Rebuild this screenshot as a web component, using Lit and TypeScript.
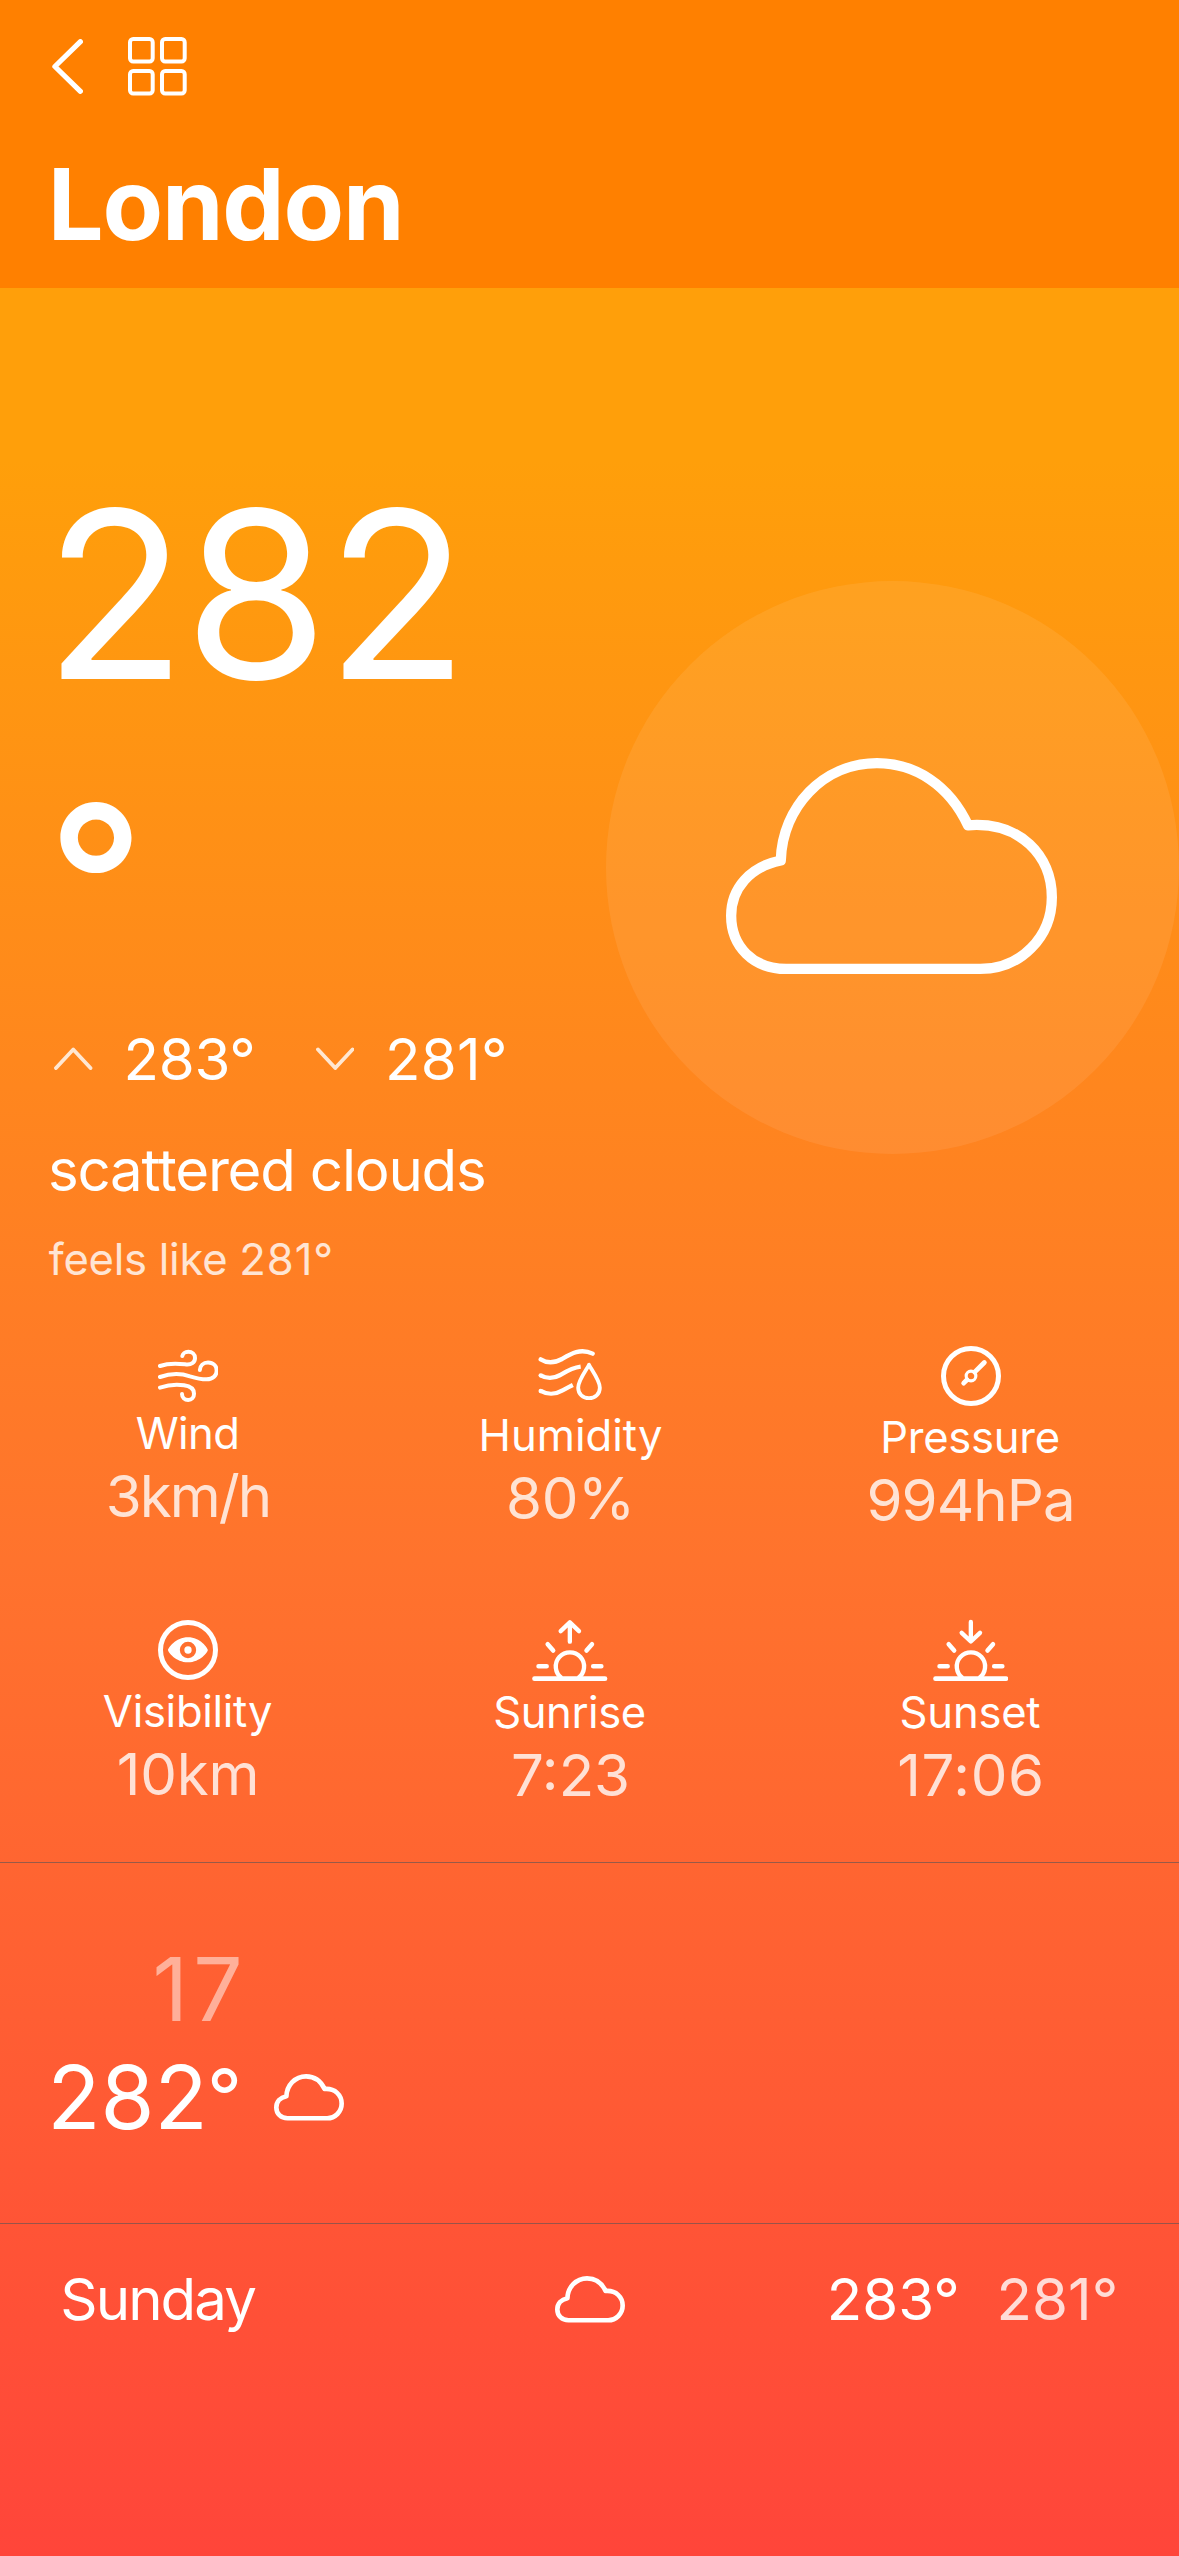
import { LitElement, html, css, svg, TemplateResult } from "lit";
import { customElement, property } from "lit/decorators.js";

const cloudPath =
  "M49.6 97.3 C51 44 92 0 145.7 0 C184 0 218 22 236.7 62.1 C289 58 320.5 93 320.5 133.9 C320.5 174 289 205.7 249 205.7 L55 205.7 C22 205.7 0 183 0 152.5 C0 125 19 103.500 49.600 97.300 Z";

@customElement("cloud-icon")
export class CloudIcon extends LitElement {
  @property({ type: Number }) stroke = 10.3;

  static styles = css`
    :host {
      display: block;
    }
    svg {
      display: block;
      width: 100%;
      overflow: visible;
    }
  `;

  render() {
    const s = this.stroke;
    return html`<svg viewBox="${-s / 2} ${-s / 2} ${320.5 + s} ${205.7 + s}" fill="none">
      <path d=${cloudPath} stroke="#fff" stroke-width=${s} stroke-linejoin="round" />
    </svg>`;
  }
}

interface Stat {
  key: string;
  label: string;
  value: string;
  viewBox: string;
  icon: TemplateResult;
}

const sunBody = svg`
  <g fill="none" stroke="#fff" stroke-width="14" stroke-linecap="round">
    <path d="M282.500 266 H494" />
    <path d="M294.500 229 H319 M458.500 229 H483 M322 162.500 L338.500 181.500 M455 162.500 L438.500 181.500" stroke-width="13.500" />
    <path d="M364 264 A42.500 42.500 0 1 1 413.500 264" stroke-width="13" stroke-linecap="butt" />
  </g>`;

const stats: Stat[] = [
  {
    key: "wind",
    label: "Wind",
    value: "3km/h",
    viewBox: "294 75 182 173.7",
    icon: svg`<g fill="none" stroke="#fff" stroke-width="12" stroke-linecap="round">
      <path d="M300 138 C325 129 350 130 375 133 C394 136 405 127 405 114 C405 103 396 95.500 385 95.500 C375 95.500 368 101 367 108" />
      <path d="M300 171 C325 162 358 158 390 169 C412 176 425 178 440 178 C459 178 470 166 470 152 C470 138 460 127.500 444 127.500 C430 127.500 420 137 419.500 150" />
      <path d="M300 203 C325 194.500 350 192.500 372 196 C392 199 402 208 402 221 C402 232 395 240 384.500 240 C374 240 366 232 366 222" />
    </g>`,
  },
  {
    key: "humidity",
    label: "Humidity",
    value: "80%",
    viewBox: "293 75 194 180.3",
    icon: svg`<g fill="none" stroke="#fff" stroke-width="13">
      <path d="M301 118 C320 130 343 129 365 117 C390 102 420 83 457 101" stroke-linecap="round" />
      <path d="M301 166 C320 177 340 176 360 165 C380 153 396 143 421 140" />
      <path d="M301 213 C320 224 345 224 365 212 C378 205 385 201 397.500 195" />
      <path d="M446 134.500 C440 147 413.500 181 413.500 203 C413.500 222 428 234.500 446 234.500 C464 234.500 478.500 222 478.500 203 C478.500 181 452 147 446 134.500 Z" stroke-width="11.500" stroke-linejoin="round" />
    </g>
    <g fill="#fff"><circle cx="301" cy="166" r="6.500" /><circle cx="301" cy="213" r="6.500" /></g>`,
  },
  {
    key: "pressure",
    label: "Pressure",
    value: "994hPa",
    viewBox: "363 75 180 186.3",
    icon: svg`<g fill="none" stroke="#fff" stroke-linecap="round">
      <circle cx="453" cy="168" r="82.500" stroke-width="15" />
      <circle cx="453" cy="168" r="14.500" stroke-width="9.500" />
      <path d="M493 127.500 L464 156.500 M431 189.500 L441 179.500" stroke-width="14.500" />
    </g>`,
  },
  {
    key: "visibility",
    label: "Visibility",
    value: "10km",
    viewBox: "294 84 180 188.4",
    icon: svg`<circle cx="384" cy="180" r="82.500" fill="none" stroke="#fff" stroke-width="15" />
      <path fill="#fff" fill-rule="evenodd" d="M324 180 C324 174 347 141.500 384 141.500 C421 141.500 443.500 174 443.500 180 C443.500 186 421 217 384 217 C347 217 324 186 324 180 Z M384 155.500 a24.500 24.500 0 1 0 0 49 a24.500 24.500 0 1 0 0 -49 Z" />
      <circle cx="384" cy="180" r="11" fill="#fff" />`,
  },
  {
    key: "sunrise",
    label: "Sunrise",
    value: "7:23",
    viewBox: "275 84 227 191.4",
    icon: svg`${sunBody}<path d="M388.500 97 V155 M361 123.500 L388.500 97 L416 123.500" fill="none" stroke="#fff" stroke-width="13" stroke-linecap="round" stroke-linejoin="round" />`,
  },
  {
    key: "sunset",
    label: "Sunset",
    value: "17:06",
    viewBox: "275 84 227 191.4",
    icon: svg`${sunBody}<path d="M388.500 96 V153 M361 128.500 L388.500 154.500 L416 128.500" fill="none" stroke="#fff" stroke-width="13" stroke-linecap="round" stroke-linejoin="round" />`,
  },
];

@customElement("app-root")
export class AppRoot extends LitElement {
  static styles = css`
    :host {
      display: block;
      width: 1179px;
      height: 2556px;
      overflow: hidden;
      color: #fff;
      font-family: Inter, "Liberation Sans", sans-serif;
      font-size: 58.2px;
      font-weight: 400;
      white-space: nowrap;
    }
    .screen {
      display: flex;
      flex-direction: column;
      height: 100%;
    }
    svg {
      display: block;
      flex: none;
    }
    .header {
      flex: none;
      box-sizing: border-box;
      height: 288px;
      padding-top: 37px;
      background: #ff8000;
    }
    .toolbar {
      display: flex;
      align-items: center;
      gap: 45px;
      height: 59px;
      padding-left: 52px;
    }
    .city {
      margin: 48px 0 0 47.8px;
      font-size: 98.9px;
      font-weight: 700;
      line-height: 120px;
      letter-spacing: -1.2px;
    }
    .body {
      flex: 1;
      background: linear-gradient(#ff9f0a 0, #ff9f0a 172px, #ff732d 1272px, #ff453a 100%);
    }
    .hero {
      display: flex;
      justify-content: space-between;
      height: 1057px;
    }
    .now {
      padding-top: 166.4px;
    }
    .temp {
      margin-left: 44px;
      font-size: 233.4px;
      line-height: 280px;
      letter-spacing: -2.4px;
    }
    .unit {
      margin: 5px 0 -5px 47.5px;
      font-size: 212px;
      font-weight: 500;
      line-height: 282.6px;
    }
    .range {
      display: flex;
      align-items: center;
      margin-top: 2px;
      padding-left: 54px;
      line-height: 80px;
    }
    .range .high {
      width: 192px;
      margin-left: 31px;
      letter-spacing: -0.27px;
    }
    .range .low {
      margin-left: 31px;
      letter-spacing: 0.27px;
    }
    .summary {
      margin: 32.8px 0 0 48px;
      line-height: 76px;
      letter-spacing: -1.22px;
    }
    .feels {
      margin: 22px 0 0 48.8px;
      font-size: 43.6px;
      line-height: 60px;
      letter-spacing: -0.25px;
      opacity: 0.8;
    }
    .feels span {
      letter-spacing: 0.9px;
    }
    .badge {
      display: flex;
      align-items: center;
      justify-content: center;
      width: 573px;
      height: 573px;
      margin-top: 293px;
      border-radius: 50%;
      background: rgba(255, 255, 255, 0.08);
    }
    .badge cloud-icon {
      width: 331px;
      margin: 0 2.5px 2.5px 0;
    }
    .stats {
      display: grid;
      grid-template-columns: 376px 389px 412px;
      grid-template-rows: 273px 244px;
      border-bottom: 1px solid rgba(84, 84, 88, 0.6);
    }
    .stat {
      display: flex;
      flex-direction: column;
      align-items: center;
    }
    .label {
      margin-top: 1px;
      font-size: 43.6px;
      line-height: 60px;
    }
    .value {
      line-height: 65.6px;
      opacity: 0.8;
    }
    .wind svg {
      width: 60.7px;
      height: 57.9px;
    }
    .wind .label {
      letter-spacing: -0.61px;
      margin-left: -1px;
    }
    .wind .value {
      letter-spacing: -1.96px;
    }
    .humidity svg {
      width: 64.7px;
      height: 60.1px;
    }
    .humidity .value {
      letter-spacing: -0.31px;
    }
    .pressure svg {
      width: 60px;
      height: 62.1px;
    }
    .pressure .label {
      letter-spacing: -0.27px;
      margin-right: 2px;
    }
    .pressure .value {
      letter-spacing: -0.97px;
      margin-right: 1px;
    }
    .visibility svg {
      width: 60px;
      height: 62.8px;
    }
    .visibility .label {
      letter-spacing: -0.29px;
      margin-right: 1px;
    }
    .visibility .value {
      letter-spacing: -0.2px;
    }
    .sunrise svg,
    .sunset svg {
      width: 75.7px;
      height: 63.8px;
      margin-right: 1px;
    }
    .sunrise .label {
      letter-spacing: -0.43px;
      margin-right: 2px;
    }
    .sunset .label {
      letter-spacing: -0.23px;
      margin-right: 2px;
    }
    .sunset .value {
      letter-spacing: 0.67px;
    }
    .hourly {
      display: grid;
      grid-template-columns: 195.5px 70px;
      grid-template-rows: 103px 110px;
      column-gap: 31.3px;
      align-items: center;
      box-sizing: border-box;
      height: 361px;
      padding: 76.3px 0 0 47.2px;
      font-size: 87.3px;
      border-bottom: 1px solid rgba(84, 84, 88, 0.6);
    }
    .hour {
      align-self: start;
      justify-self: end;
      line-height: 100px;
      letter-spacing: 5.2px;
      margin-right: -5.2px;
      opacity: 0.5;
    }
    .hour-temp {
      grid-row: 2;
      line-height: 110px;
    }
    .deg {
      display: inline-block;
      margin-left: -0.6px;
      font-size: 76.8px;
      line-height: 0;
      vertical-align: 5.6px;
    }
    .hourly cloud-icon {
      grid-row: 2;
      width: 70px;
    }
    .day {
      display: grid;
      grid-template-columns: 494.7px 271.8px 169.8px auto;
      align-items: center;
      padding: 34.8px 0 0 60.3px;
      line-height: 80px;
    }
    .day .name {
      letter-spacing: -1.94px;
    }
    .day cloud-icon {
      width: 70px;
    }
    .day .min {
      opacity: 0.8;
    }
  `;

  private header() {
    return html`<header class="header">
      <div class="toolbar">
        <svg width="31" height="55" viewBox="0 0 31 55" fill="none">
          <path d="M28.400 2.700 L2.900 27.500 L28.400 52.300" stroke="#fff" stroke-width="5.200" stroke-linecap="round" stroke-linejoin="round" />
        </svg>
        <svg width="59" height="59" viewBox="0 0 59 59" fill="none" stroke="#fff" stroke-width="4">
          <rect x="2" y="2" width="22.700" height="22.500" rx="3.200" />
          <rect x="34" y="2" width="22.700" height="22.500" rx="3.200" />
          <rect x="2" y="34" width="22.700" height="22.500" rx="3.200" />
          <rect x="34" y="34" width="22.700" height="22.500" rx="3.200" />
        </svg>
      </div>
      <div class="city">London</div>
    </header>`;
  }

  private caret(d: string) {
    return html`<svg width="38.500" height="23" viewBox="0 0 38.500 23" fill="none" opacity="0.8">
      <path d=${d} stroke="#fff" stroke-width="3.800" stroke-linecap="round" stroke-linejoin="round" />
    </svg>`;
  }

  private stat(s: Stat) {
    return html`<div class="stat ${s.key}">
      <svg viewBox=${s.viewBox}>${s.icon}</svg>
      <div class="label">${s.label}</div>
      <div class="value">${s.value}</div>
    </div>`;
  }

  render() {
    return html`<div class="screen">
      ${this.header()}
      <main class="body">
        <section class="hero">
          <div class="now">
            <div class="temp">282</div>
            <div class="unit">°</div>
            <div class="range">
              ${this.caret("M2 21 L19.25 2.500 L36.500 21")}
              <span class="high">283°</span>
              ${this.caret("M2 2.500 L19.25 21 L36.500 2.500")}
              <span class="low">281°</span>
            </div>
            <div class="summary">scattered clouds</div>
            <div class="feels">feels like <span>281°</span></div>
          </div>
          <div class="badge"><cloud-icon></cloud-icon></div>
        </section>
        <section class="stats">${stats.map((s) => this.stat(s))}</section>
        <section class="hourly">
          <div class="hour">17</div>
          <div class="hour-temp">282<span class="deg">°</span></div>
          <cloud-icon stroke="22.800"></cloud-icon>
        </section>
        <section class="day">
          <span class="name">Sunday</span>
          <cloud-icon stroke="22.800"></cloud-icon>
          <span class="max">283°</span>
          <span class="min">281°</span>
        </section>
      </main>
    </div>`;
  }
}
